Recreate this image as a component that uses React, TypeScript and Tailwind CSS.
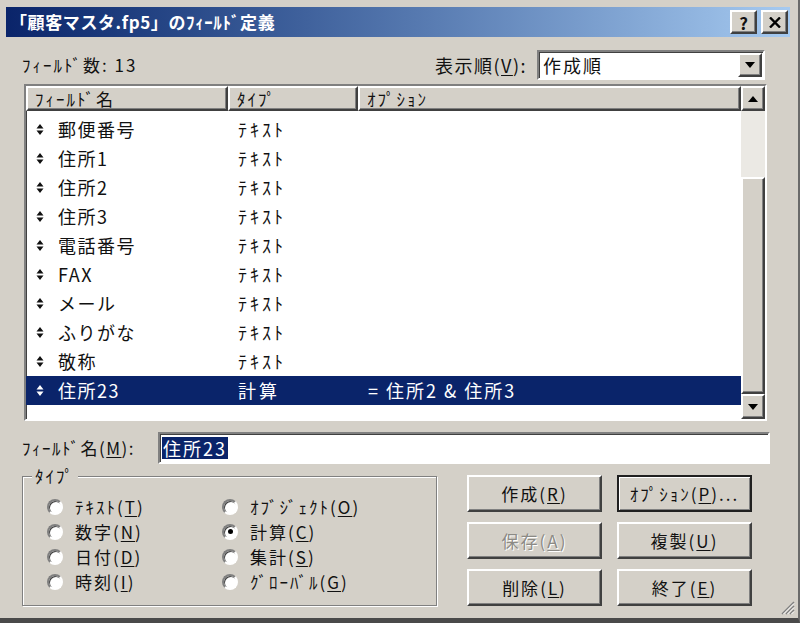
import type { ReactNode } from 'react'

const font = { fontFamily: '"Noto Sans CJK JP", "Liberation Sans", sans-serif' }

const rows = [
  { name: '郵便番号', type: 'ﾃｷｽﾄ', opt: '' },
  { name: '住所1', type: 'ﾃｷｽﾄ', opt: '' },
  { name: '住所2', type: 'ﾃｷｽﾄ', opt: '' },
  { name: '住所3', type: 'ﾃｷｽﾄ', opt: '' },
  { name: '電話番号', type: 'ﾃｷｽﾄ', opt: '' },
  { name: 'FAX', type: 'ﾃｷｽﾄ', opt: '' },
  { name: 'メール', type: 'ﾃｷｽﾄ', opt: '' },
  { name: 'ふりがな', type: 'ﾃｷｽﾄ', opt: '' },
  { name: '敬称', type: 'ﾃｷｽﾄ', opt: '' },
  { name: '住所23', type: '計算', opt: '= 住所2 & 住所3', selected: true },
]

const types = [
  { label: 'ﾃｷｽﾄ', key: 'T' },
  { label: 'ｵﾌﾞｼﾞｪｸﾄ', key: 'O' },
  { label: '数字', key: 'N' },
  { label: '計算', key: 'C', checked: true },
  { label: '日付', key: 'D' },
  { label: '集計', key: 'S' },
  { label: '時刻', key: 'I' },
  { label: 'ｸﾞﾛｰﾊﾞﾙ', key: 'G' },
]

const raised =
  'bg-[#d4d0c8] border-2 border-t-white border-l-white border-r-[#404040] border-b-[#404040] shadow-[inset_-1px_-1px_0_#808080]'
const sunken =
  'border-2 border-t-[#808080] border-l-[#808080] border-r-white border-b-white shadow-[inset_1px_1px_0_#404040]'

function Key({ label, k }: { label: string; k: string }) {
  return (
    <span>
      {label}(<span className="underline underline-offset-2">{k}</span>)
    </span>
  )
}

function Handle() {
  return (
    <svg width="8" height="11" viewBox="0 0 8 11" className="shrink-0">
      <path d="M4 0 L7.5 4.5 L0.5 4.5 Z M4 11 L7.5 6.5 L0.5 6.5 Z" fill="currentColor" />
    </svg>
  )
}

function Arrow({ up }: { up?: boolean }) {
  return (
    <svg width="10" height="6" viewBox="0 0 10 6">
      <path d={up ? 'M5 0 L10 6 L0 6 Z' : 'M0 0 L10 0 L5 6 Z'} fill="#000" />
    </svg>
  )
}

function Btn({ children, isDefault, disabled }: { children: ReactNode; isDefault?: boolean; disabled?: boolean }) {
  return (
    <button
      className={`h-[37px] flex items-center justify-center text-[17px] tracking-[2px] ${
        isDefault
          ? 'bg-[#d4d0c8] border-2 border-[#202020] shadow-[inset_1px_1px_0_#fff,inset_-1px_-1px_0_#808080]'
          : raised
      } ${disabled ? 'text-[#8c8a85] [text-shadow:1px_1px_0_#fff]' : 'text-[#111]'}`}
    >
      {children}
    </button>
  )
}

export default function App() {
  return (
    <div
      style={font}
      className="relative w-[800px] h-[623px] bg-[#d4d0c8] border-r-2 border-b-[5px] border-r-[#6a6a6a] border-b-[#4a4a4a] flex flex-col text-[#111] overflow-hidden"
    >
      {/* Title bar */}
      <div className="mt-[7px] ml-[6px] mr-[8px] h-[30px] flex items-center justify-between bg-gradient-to-r from-[#0a246a] to-[#a6caf0] pl-[4px] pr-[2px]">
        <span className="text-white text-[17px] font-bold tracking-[0.6px]">「顧客マスタ.fp5」のﾌｨｰﾙﾄﾞ定義</span>
        <div className="flex gap-[4px]">
          <div className={`w-[27px] h-[24px] flex items-center justify-center text-[17px] font-bold leading-none ${raised}`}>?</div>
          <div className={`w-[27px] h-[24px] flex items-center justify-center ${raised}`}>
            <svg width="12" height="11" viewBox="0 0 12 11">
              <path d="M1 0.5 L11 10.5 M11 0.5 L1 10.5" stroke="#000" strokeWidth="2.4" />
            </svg>
          </div>
        </div>
      </div>

      <div className="flex flex-col pl-[22px] pr-[28px]">
        {/* Count + sort order */}
        <div className="mt-[13px] h-[30px] flex items-center justify-between pr-[5px]">
          <span className="text-[17px] tracking-[2px]">ﾌｨｰﾙﾄﾞ数: 13</span>
          <div className="flex items-center gap-[10px]">
            <span className="text-[18px] tracking-[1.5px]">
              <Key label="表示順" k="V" />:
            </span>
            <div className={`w-[228px] h-[30px] bg-white flex items-center justify-between ${sunken}`}>
              <span className="pl-[4px] text-[18px] tracking-[2px]">作成順</span>
              <div className={`w-[24px] h-[24px] mr-[1px] flex items-center justify-center ${raised}`}>
                <Arrow />
              </div>
            </div>
          </div>
        </div>

        {/* Field list */}
        <div className={`mt-[4px] ml-[2px] mr-[3px] h-[337px] bg-white flex ${sunken}`}>
          <div className="flex-1 flex flex-col">
            <div className="h-[25px] flex text-[17px] tracking-[2px]">
              <div className={`w-[202px] pl-[7px] flex items-center ${raised}`}>ﾌｨｰﾙﾄﾞ名</div>
              <div className={`w-[130px] pl-[7px] flex items-center ${raised}`}>ﾀｲﾌﾟ</div>
              <div className={`flex-1 pl-[7px] flex items-center ${raised}`}>ｵﾌﾟｼｮﾝ</div>
            </div>
            <div className="pt-[4px] flex flex-col">
              {rows.map((r) => (
                <div
                  key={r.name}
                  className={`h-[29px] flex items-center text-[18px] ${r.selected ? 'bg-[#0a246a] text-white' : ''}`}
                >
                  <div className="w-[202px] flex items-center pl-[10px] gap-[14px]">
                    <Handle />
                    <span className="tracking-[1.5px]">{r.name}</span>
                  </div>
                  <div className="w-[130px] pl-[10px] tracking-[3px]">{r.type}</div>
                  <div className="flex-1 pl-[10px] tracking-[2px]">{r.opt}</div>
                </div>
              ))}
            </div>
          </div>
          {/* Scrollbar */}
          <div className="w-[24px] flex flex-col">
            <div className={`h-[25px] flex items-center justify-center ${raised}`}>
              <Arrow up />
            </div>
            <div className="h-[66px] bg-[#ebe9e4]" />
            <div className={`flex-1 ${raised}`} />
            <div className={`h-[25px] flex items-center justify-center ${raised}`}>
              <Arrow />
            </div>
          </div>
        </div>

        {/* Field name */}
        <div className="mt-[11px] h-[32px] flex items-center">
          <span className="w-[136px] text-[17px] tracking-[1.5px] whitespace-nowrap">
            <Key label="ﾌｨｰﾙﾄﾞ名" k="M" />:
          </span>
          <div className={`flex-1 h-[32px] bg-white flex items-center ${sunken}`}>
            <span className="ml-[2px] px-[1px] bg-[#0a246a] text-white text-[18px] leading-[22px] tracking-[2px]">住所23</span>
          </div>
        </div>

        {/* Type + buttons */}
        <div className="mt-[2px] flex">
          <fieldset className="w-[415px] h-[140px] border border-[#808080] shadow-[inset_1px_1px_0_#fff,1px_1px_0_#fff]">
            <legend className="ml-[9px] px-[3px] bg-[#d4d0c8] text-[17px] leading-[20px] tracking-[2px]">ﾀｲﾌﾟ</legend>
            <div className="mt-[8px] pl-[24px] grid grid-cols-[175px_1fr]">
              {types.map((t) => (
                <div key={t.key} className="h-[25px] flex items-center gap-[12px] text-[17px] tracking-[2px]">
                  <div className="w-[16px] h-[16px] shrink-0 rounded-full bg-white border-2 border-t-[#808080] border-l-[#808080] border-r-white border-b-white shadow-[inset_1px_1px_0_#404040] flex items-center justify-center">
                    {t.checked && <div className="w-[5px] h-[5px] rounded-full bg-black" />}
                  </div>
                  <Key label={t.label} k={t.key} />
                </div>
              ))}
            </div>
          </fieldset>

          <div className="ml-[30px] mt-[9px] grid grid-cols-[135px_135px] gap-x-[15px] gap-y-[10px] content-start">
            <Btn>
              <Key label="作成" k="R" />
            </Btn>
            <Btn isDefault>
              <span>
                ｵﾌﾟｼｮﾝ(<span className="underline underline-offset-2">P</span>)...
              </span>
            </Btn>
            <Btn disabled>
              <Key label="保存" k="A" />
            </Btn>
            <Btn>
              <Key label="複製" k="U" />
            </Btn>
            <Btn>
              <Key label="削除" k="L" />
            </Btn>
            <Btn>
              <Key label="終了" k="E" />
            </Btn>
          </div>
        </div>
      </div>

      {/* Resize grip */}
      <svg width="16" height="16" viewBox="0 0 16 16" className="absolute right-[3px] bottom-[3px]">
        <path d="M15 3 L3 15 M15 7 L7 15 M15 11 L11 15" stroke="#808080" strokeWidth="1.5" />
        <path d="M15 4.5 L4.5 15 M15 8.5 L8.5 15 M15 12.5 L12.5 15" stroke="#fff" strokeWidth="1" />
      </svg>
    </div>
  )
}
